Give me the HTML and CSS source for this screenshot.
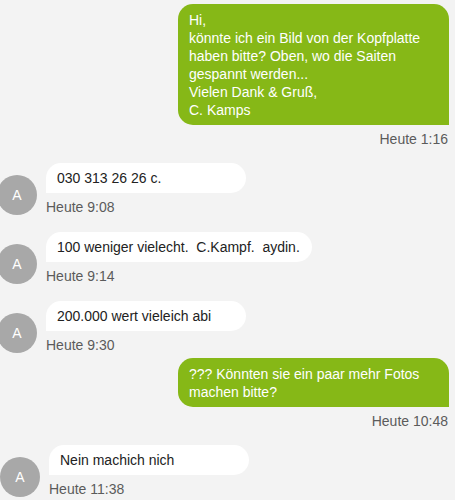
FILE: index.html
```html
<!DOCTYPE html>
<html lang="de">
<head>
<meta charset="utf-8">
<title>Chat</title>
<link rel="stylesheet" href="styles.css">
</head>
<body>
<div class="chat">
  <div class="row out">
    <div class="bubble bubble-out">Hi,<br>könnte ich ein Bild von der Kopfplatte haben bitte? Oben, wo die Saiten gespannt werden...<br>Vielen Dank &amp; Gruß,<br>C. Kamps</div>
    <div class="time time-out">Heute 1:16</div>
  </div>
  <div class="row in">
    <div class="avatar">A</div>
    <div class="content">
      <div class="bubble bubble-in">030 313 26 26 c.</div>
      <div class="time">Heute 9:08</div>
    </div>
  </div>
  <div class="row in">
    <div class="avatar">A</div>
    <div class="content">
      <div class="bubble bubble-in">100 weniger vielecht.&nbsp; C.Kampf.&nbsp; aydin.</div>
      <div class="time">Heute 9:14</div>
    </div>
  </div>
  <div class="row in">
    <div class="avatar">A</div>
    <div class="content">
      <div class="bubble bubble-in">200.000 wert vieleich abi</div>
      <div class="time">Heute 9:30</div>
    </div>
  </div>
  <div class="row out">
    <div class="bubble bubble-out">??? Könnten sie ein paar mehr Fotos machen bitte?</div>
    <div class="time time-out">Heute 10:48</div>
  </div>
  <div class="row in shift">
    <div class="avatar">A</div>
    <div class="content">
      <div class="bubble bubble-in">Nein machich nich</div>
      <div class="time">Heute 11:38</div>
    </div>
  </div>
</div>
</body>
</html>
```
FILE: styles.css
```css
html, body {
  margin: 0;
  padding: 0;
  background: #f3f3f3;
}
body {
  font-family: "Liberation Sans", Arial, sans-serif;
  font-size: 14px;
  line-height: 18px;
  color: #222;
  overflow: hidden;
}
.chat {
  display: flex;
  flex-direction: column;
  padding: 4px 6px 0 0;
}
.row.in {
  display: flex;
  align-items: flex-end;
  margin-top: 15px;
}
.row.in + .row.in {
  margin-top: 16px;
}
.row.out {
  display: flex;
  flex-direction: column;
  align-items: flex-end;
}
.row.in + .row.out {
  margin-top: 4px;
}
.row.shift {
  padding-left: 3px;
}
.avatar {
  width: 40px;
  height: 40px;
  flex: none;
  border-radius: 50%;
  background: #a8a8a8;
  color: #fff;
  font-size: 14px;
  display: flex;
  align-items: center;
  justify-content: center;
  margin-left: -3px;
  margin-right: 9px;
  margin-bottom: 1px;
}
.content {
  display: flex;
  flex-direction: column;
  align-items: flex-start;
}
.bubble {
  box-sizing: border-box;
  border-radius: 15px;
}
.bubble-out {
  background: #86b817;
  color: #fff;
  max-width: 271px;
  padding: 7px 12px 6px 11px;
  border-bottom-right-radius: 0;
}
.bubble-in {
  background: #fff;
  color: #222;
  min-width: 200px;
  padding: 6px 12px 6px 11px;
  border-bottom-left-radius: 0;
}
.time {
  margin-top: 5px;
  color: #5b5b5b;
  font-size: 14px;
  line-height: 18px;
}
.time-out {
  margin-right: 1px;
}
```
